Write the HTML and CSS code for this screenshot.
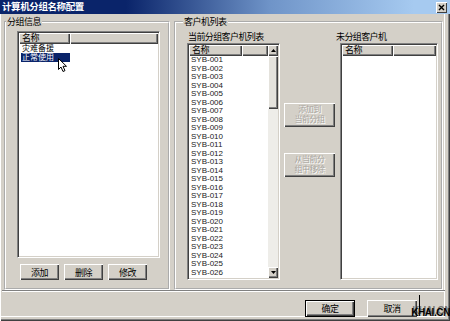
FILE: index.html
```html
<html lang="zh-CN">
<head>
  <meta charset="UTF-8">
  <meta name="viewport" content="width=device-width, initial-scale=1.0">
  <link rel="stylesheet" href="styles.css">
  <title>计算机分组名称配置</title>
</head>
<body>
<div class="window">
  <div class="titlebar">
    <span class="title">计算机分组名称配置</span>
    <span class="close-btn">
      <svg width="11" height="11" viewBox="0 0 11 11"><path d="M3 3 L8 8 M8 3 L3 8" stroke="#000" stroke-width="1.4"/></svg>
    </span>
  </div>

  <div class="groups">
    <fieldset class="group group-left">
      <legend>分组信息</legend>
      <div class="listview list-groups">
        <div class="lv-head">
          <span class="lv-col">名称</span>
          <span class="lv-col lv-col-rest"></span>
        </div>
        <div class="lv-body">
          <div class="lv-row"><span>灾难备援</span></div>
          <div class="lv-row selected"><span>正常使用</span></div>
        </div>
        <svg class="cursor" width="10" height="15" viewBox="0 0 10 15">
          <path d="M0.5 0.5 L0.5 11.5 L3 9 L5 13.5 L7 12.6 L5 8.3 L8.5 8.3 Z" fill="#fff" stroke="#000" stroke-width="1"/>
        </svg>
      </div>
      <div class="btn-row">
        <button class="btn btn-small">添加</button>
        <button class="btn btn-small">删除</button>
        <button class="btn btn-small">修改</button>
      </div>
    </fieldset>

    <fieldset class="group group-right">
      <legend>客户机列表</legend>
      <div class="client-cols">
        <div class="client-col col-current">
          <div class="col-label">当前分组客户机列表</div>
          <div class="listview list-current">
            <div class="lv-main">
              <div class="lv-head">
                <span class="lv-col">名称</span>
                <span class="lv-col lv-col-rest"></span>
              </div>
              <div class="lv-body lv-ascii">
                <div class="lv-row">SYB-001</div>
                <div class="lv-row">SYB-002</div>
                <div class="lv-row">SYB-003</div>
                <div class="lv-row">SYB-004</div>
                <div class="lv-row">SYB-005</div>
                <div class="lv-row">SYB-006</div>
                <div class="lv-row">SYB-007</div>
                <div class="lv-row">SYB-008</div>
                <div class="lv-row">SYB-009</div>
                <div class="lv-row">SYB-010</div>
                <div class="lv-row">SYB-011</div>
                <div class="lv-row">SYB-012</div>
                <div class="lv-row">SYB-013</div>
                <div class="lv-row">SYB-014</div>
                <div class="lv-row">SYB-015</div>
                <div class="lv-row">SYB-016</div>
                <div class="lv-row">SYB-017</div>
                <div class="lv-row">SYB-018</div>
                <div class="lv-row">SYB-019</div>
                <div class="lv-row">SYB-020</div>
                <div class="lv-row">SYB-021</div>
                <div class="lv-row">SYB-022</div>
                <div class="lv-row">SYB-023</div>
                <div class="lv-row">SYB-024</div>
                <div class="lv-row">SYB-025</div>
                <div class="lv-row">SYB-026</div>
              </div>
            </div>
            <div class="scrollbar">
              <span class="sb-btn">
                <svg width="5" height="3" viewBox="0 0 5 3"><path d="M0 3 L2.5 0 L5 3 Z" fill="#000"/></svg>
              </span>
              <span class="sb-thumb"></span>
              <span class="sb-track"></span>
              <span class="sb-btn">
                <svg width="5" height="3" viewBox="0 0 5 3"><path d="M0 0 L2.5 3 L5 0 Z" fill="#000"/></svg>
              </span>
            </div>
          </div>
        </div>

        <div class="move-btns">
          <button class="btn btn-move" disabled>添加到<br>当前分组</button>
          <button class="btn btn-move" disabled>从当前分<br>组中移除</button>
        </div>

        <div class="client-col col-free">
          <div class="col-label">未分组客户机</div>
          <div class="listview list-free">
            <div class="lv-main">
              <div class="lv-head">
                <span class="lv-col">名称</span>
                <span class="lv-col lv-col-rest"></span>
              </div>
              <div class="lv-body"></div>
            </div>
          </div>
        </div>
      </div>
    </fieldset>
  </div>

  <div class="footer">
    <button class="btn btn-footer btn-default">确定</button>
    <button class="btn btn-footer">取消</button>
    <span class="watermark">KHAI.CN</span>
  </div>
</div>
</body>
</html>
```

FILE: styles.css
```css
* {
  box-sizing: border-box;
}

body {
  margin: 0;
  background: #d4d0c8;
  font-family: "Liberation Sans", "Noto Sans CJK SC", sans-serif;
  font-size: 9px;
  color: #000;
}

.window {
  position: relative;
  width: 450px;
  height: 321px;
  overflow: hidden;
  background: #d4d0c8;
  box-shadow: inset 1px 0 #fff, inset -1px -1px #404040, inset -2px -2px #808080, inset -5px -4px #d4d0c8, inset -6px -5px #fff;
}

/* title bar */
.titlebar {
  height: 14px;
  display: flex;
  align-items: center;
  justify-content: space-between;
  padding: 0 3px 0 2px;
  background: linear-gradient(90deg, #0a246a 0%, #0a246a 28%, #6f94c8 60%, #a6caf0 92%);
}

.title {
  color: #fff;
  font-weight: bold;
  font-size: 9.5px;
  line-height: 12px;
  letter-spacing: -0.4px;
}

.close-btn {
  display: flex;
  width: 11px;
  height: 11px;
  background: #d4d0c8;
  box-shadow: inset 1px 1px #fff, inset -1px -1px #404040;
}

/* group boxes */
.groups {
  display: flex;
  gap: 4px;
  padding-left: 4px;
  margin-top: 2px;
}

.group {
  margin: 0;
  min-width: 0;
  border: 2px groove #fff;
  padding: 3px 0 8px 11px;
}

.group legend {
  padding: 0 1px;
  line-height: 12px;
  letter-spacing: -0.5px;
}

.group-left {
  width: 166px;
}

.group-left legend {
  margin-left: -11px;
}

.group-right {
  width: 269px;
}

.group-right legend {
  margin-left: -4px;
}

/* list views */
.listview {
  position: relative;
  display: flex;
  padding: 1px;
  background: #fff;
  border: 1px solid;
  border-color: #808080 #fff #fff #808080;
  box-shadow: inset 1px 1px #404040, inset -1px -1px #d4d0c8;
  overflow: hidden;
}

.lv-main {
  flex: 1;
  min-width: 0;
}

.list-groups {
  flex-direction: column;
  width: 143px;
  height: 227px;
}

.lv-head {
  display: flex;
  height: 11px;
}

.lv-col {
  width: 51px;
  padding-left: 3px;
  line-height: 11px;
  background: #d4d0c8;
  box-shadow: inset 1px 1px #fff, inset -1px -1px #404040, inset -2px -2px #808080;
  letter-spacing: -0.5px;
}

.lv-col-rest {
  flex: 1;
}

.list-current .lv-col {
  width: 53px;
}

.lv-body {
  padding-top: 0;
}

.lv-row {
  height: 8.5px;
  line-height: 8.5px;
  padding-left: 2px;
}

.list-groups .lv-row {
  height: 9px;
  line-height: 9px;
  font-size: 8px;
}

.lv-row span {
  display: block;
  width: 49px;
  padding-left: 1px;
}

.lv-row.selected span {
  background: #0a246a;
  color: #fff;
}

.lv-ascii .lv-row {
  font-size: 8px;
  color: #222;
}

.cursor {
  position: absolute;
  left: 40px;
  top: 26px;
}

/* scrollbar */
.scrollbar {
  width: 10px;
  display: flex;
  flex-direction: column;
}

.sb-btn {
  height: 11px;
  display: flex;
  align-items: center;
  justify-content: center;
  background: #d4d0c8;
  box-shadow: inset 1px 1px #fff, inset -1px -1px #404040, inset -2px -2px #808080;
}

.sb-thumb {
  height: 53px;
  background: #e4e2dc;
  box-shadow: inset 1px 1px #fff, inset -1px -1px #404040, inset -2px -2px #808080;
}

.sb-track {
  flex: 1;
  background: #eeede9;
}

/* client columns */
.client-cols {
  display: flex;
}

.client-col {
  display: flex;
  flex-direction: column;
}

.col-label {
  height: 12px;
  line-height: 12px;
  padding-left: 1px;
  letter-spacing: -0.6px;
}

.col-current {
  width: 93px;
}

.list-current,
.list-free {
  height: 237px;
}

.move-btns {
  width: 51px;
  margin: 0 5px 0 4px;
  padding-top: 72px;
  display: flex;
  flex-direction: column;
  gap: 26px;
}

.col-free {
  width: 98px;
}

.col-free .col-label {
  margin-left: -5px;
}

/* buttons */
.btn {
  font-family: inherit;
  font-size: 9px;
  color: #000;
  background: #d4d0c8;
  border: none;
  padding: 0;
  letter-spacing: -0.5px;
  box-shadow: inset 1px 1px #fff, inset -1px -1px #404040, inset -2px -2px #808080;
}

.btn-row {
  display: flex;
  gap: 5px;
  margin-top: 6px;
  padding-left: 3px;
}

.btn-small {
  width: 39px;
  height: 16px;
}

.btn-move {
  height: 24px;
  font-size: 8px;
  line-height: 10.5px;
  color: #a8a59e;
  text-shadow: 1px 1px #fff;
}

.footer {
  position: relative;
  height: 28px;
  margin: 0 5px 0 2px;
  display: flex;
  justify-content: flex-end;
  gap: 12px;
  padding: 9px 28px 0 0;
  border-top: 1px solid #808080;
  box-shadow: inset 0 1px #fff;
}

.btn-footer {
  width: 50px;
  height: 17px;
}

.btn-default {
  border: 1px solid #000;
}

.watermark {
  position: absolute;
  right: -5px;
  bottom: 0;
  font-weight: bold;
  font-size: 10px;
  line-height: 11px;
  letter-spacing: -0.4px;
  color: #000;
  text-shadow: 1px -2px 0 rgba(0, 0, 0, 0.45);
}

.watermark::before {
  content: "";
  position: absolute;
  left: 8px;
  top: -12px;
  width: 1px;
  height: 14px;
  background: #000;
}
```
